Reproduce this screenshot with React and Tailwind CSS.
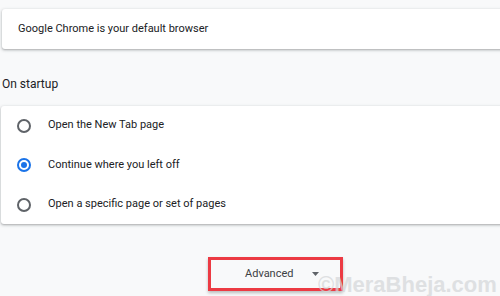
export default function App() {
  const options = [
    { label: "Open the New Tab page", checked: false },
    { label: "Continue where you left off", checked: true },
    { label: "Open a specific page or set of pages", checked: false },
  ];

  return (
    <div className="relative h-[296px] w-[500px] overflow-hidden bg-[#f8f9fa] font-['Roboto',sans-serif] text-[#202124]">
      <div className="ml-[2px] mr-[-10px] pt-[9px]">
        <div className="flex h-[40px] items-center rounded-[3px] bg-white pl-4 text-[11px] shadow-[0_1px_2px_rgba(60,64,67,0.3),0_1px_3px_1px_rgba(60,64,67,0.12)]">
          Google Chrome is your default browser
        </div>
      </div>

      <h2 className="mt-[27px] ml-[2px] text-[12px] leading-[16px] text-[#202124]">
        On startup
      </h2>

      <div className="ml-[1px] mr-[-10px] mt-[14px] rounded-[3px] bg-white shadow-[0_1px_2px_rgba(60,64,67,0.3),0_1px_3px_1px_rgba(60,64,67,0.12)]">
        {options.map((option) => (
          <label
            key={option.label}
            className="flex h-[40px] items-center pl-4 text-[11px] first:h-[39px] last:h-[39px]"
          >
            <span
              className={
                option.checked
                  ? "flex h-[14px] w-[14px] items-center justify-center rounded-full border-2 border-[#1a73e8]"
                  : "flex h-[14px] w-[14px] items-center justify-center rounded-full border-2 border-[#5f6368]"
              }
            >
              {option.checked && (
                <span className="h-[6px] w-[6px] rounded-full bg-[#1a73e8]" />
              )}
            </span>
            <span className="ml-[17px]">{option.label}</span>
          </label>
        ))}
      </div>

      <div className="mt-[33px] flex justify-start pl-[208px]">
        <button
          type="button"
          className="flex h-[34px] w-[135px] items-center border-[3px] border-[#ec3a43] pl-[34px] text-[11px] text-[#3c4043] shadow-[0_2px_3px_rgba(0,0,0,0.25)]"
        >
          Advanced
          <svg width="7" height="4" viewBox="0 0 7 4" className="ml-[19px]">
            <path d="M0 0h7L3.5 4z" fill="#5f6368" />
          </svg>
        </button>
      </div>

      <div className="pointer-events-none absolute left-[318px] top-[268px] whitespace-nowrap font-['Liberation_Sans',sans-serif] text-[22px] font-bold text-[#d4d6d8] opacity-70">
        ©MeraBheja.com
      </div>
    </div>
  );
}
